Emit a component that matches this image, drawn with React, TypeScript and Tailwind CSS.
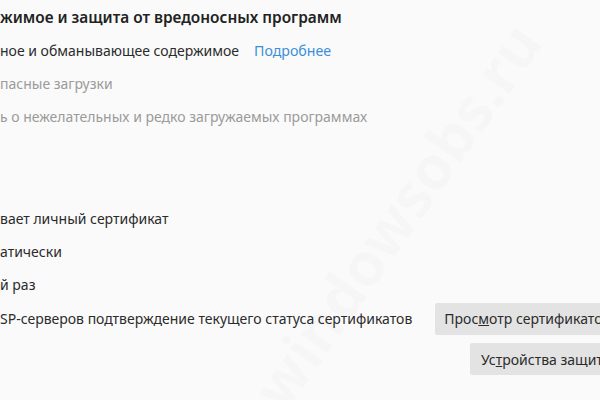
import React from 'react';

const font = { fontFamily: '"Noto Sans", "Open Sans", sans-serif' };

function Row({ children, gray = false, className = '' }: { children: React.ReactNode; gray?: boolean; className?: string }) {
  return (
    <div className={`flex items-center h-[33px] whitespace-nowrap text-[14px] ${gray ? 'text-[#9a9a9a]' : 'text-[#2b2b2b]'} ${className}`}>
      {children}
    </div>
  );
}

export default function App() {
  return (
    <div className="relative w-[600px] h-[400px] overflow-hidden bg-[#fafafa]" style={font}>
      <div className="flex flex-col pt-[1px]">
        <div className="flex items-center h-[33px] whitespace-nowrap text-[15.4px] font-semibold text-[#222]">
          жимое и защита от вредоносных программ
        </div>
        <Row>
          ное и обманывающее содержимое
          <a className="ml-[15px] text-[14.2px] text-[#3d8fd8]">Подробнее</a>
        </Row>
        <Row gray>пасные загрузки</Row>
        <Row gray className="text-[14.2px]">ь о нежелательных и редко загружаемых программах</Row>
        <div className="h-[69px]" />
        <Row>вает личный сертификат</Row>
        <Row>атически</Row>
        <Row>й раз</Row>
        <div className="flex items-center h-[33px] mt-[1px] whitespace-nowrap">
          <span className="text-[14px] text-[#2b2b2b]">SP-серверов подтверждение текущего статуса сертификатов</span>
          <button className="ml-[23px] h-[32px] pl-[9px] pr-[10px] bg-[#e3e3e3] text-[14px] text-[#2b2b2b] rounded-[2px]">
            Прос<span className="underline">м</span>отр сертификатов
          </button>
        </div>
        <div className="flex justify-start pl-[470px] mt-[8px]">
          <button className="h-[32px] px-[11px] bg-[#e3e3e3] text-[14px] text-[#2b2b2b] rounded-[2px] whitespace-nowrap">
            Ус<span className="underline">т</span>ройства защиты
          </button>
        </div>
      </div>
      <div className="pointer-events-none absolute left-[170px] top-[170px] -rotate-[55deg] text-[60px] text-[#000]/[0.015] font-bold whitespace-nowrap">
        windowsobs.ru
      </div>
    </div>
  );
}
